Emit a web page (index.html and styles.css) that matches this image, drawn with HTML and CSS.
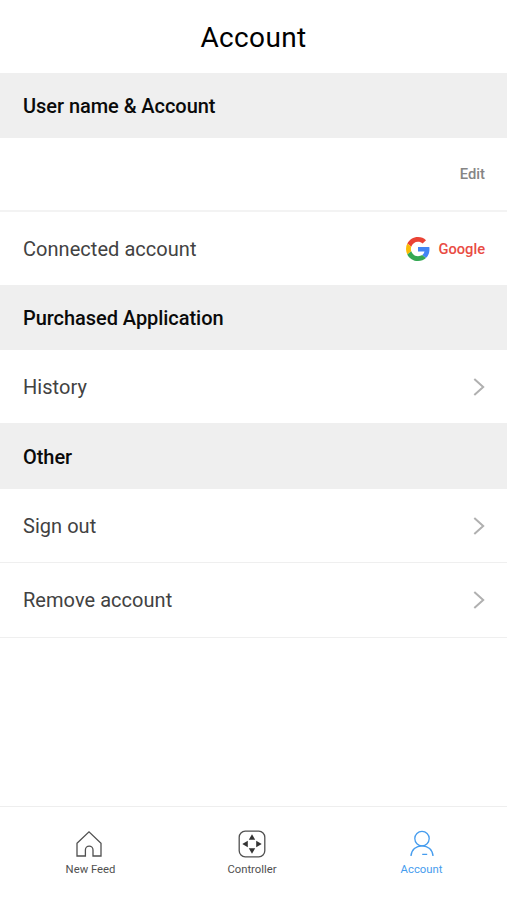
FILE: index.html
```html
<!DOCTYPE html>
<html lang="en">
<head>
  <meta charset="UTF-8" />
  <meta name="viewport" content="width=device-width, initial-scale=1.0" />
  <title>Account</title>
  <link rel="stylesheet" href="styles.css">
</head>
<body>

  <header>
    <h1>Account</h1>
  </header>

  <main>
    <h2>User name &amp; Account</h2>
    <div class="row thick">
      <a class="edit">Edit</a>
    </div>
    <div class="row connected">
      <span class="label">Connected account</span>
      <div class="provider">
        <svg class="google" viewBox="0 0 48 48">
          <path fill="#EA4335" d="M24 9.5c3.54 0 6.71 1.22 9.21 3.6l6.85-6.85C35.9 2.38 30.47 0 24 0 14.62 0 6.51 5.38 2.56 13.22l7.98 6.19C12.43 13.72 17.74 9.5 24 9.5z"/>
          <path fill="#4285F4" d="M46.98 24.55c0-1.57-.15-3.09-.38-4.55H24v9.02h12.94c-.58 2.96-2.26 5.48-4.78 7.18l7.73 6c4.51-4.18 7.09-10.36 7.09-17.65z"/>
          <path fill="#FBBC05" d="M10.53 28.59c-.48-1.45-.76-2.99-.76-4.59s.27-3.14.76-4.59l-7.98-6.19C.92 16.46 0 20.12 0 24c0 3.88.92 7.54 2.56 10.78l7.97-6.19z"/>
          <path fill="#34A853" d="M24 48c6.48 0 11.93-2.13 15.89-5.81l-7.73-6c-2.15 1.45-4.92 2.3-8.16 2.3-6.26 0-11.57-4.22-13.47-9.91l-7.98 6.19C6.51 42.62 14.62 48 24 48z"/>
        </svg>
        <span>Google</span>
      </div>
    </div>

    <h2 class="purchased">Purchased Application</h2>
    <div class="row">
      <span class="label">History</span>
      <svg class="arrow" viewBox="0 0 12 18"><path d="M1.3 1 L10.2 9 L1.3 17"/></svg>
    </div>

    <h2 class="other">Other</h2>
    <div class="row line">
      <span class="label">Sign out</span>
      <svg class="arrow" viewBox="0 0 12 18"><path d="M1.3 1 L10.2 9 L1.3 17"/></svg>
    </div>
    <div class="row line last">
      <span class="label">Remove account</span>
      <svg class="arrow" viewBox="0 0 12 18"><path d="M1.3 1 L10.2 9 L1.3 17"/></svg>
    </div>
  </main>

  <nav>
    <a class="tab feed">
      <svg viewBox="0 0 28 28"><path d="M2 13.2 L14 1.8 L26 13.2 V26 H18 V20 a3.8 3.8 0 0 0 -7.6 0 V26 H2 Z"/></svg>
      <span>New Feed</span>
    </a>
    <a class="tab">
      <svg viewBox="0 0 28 28">
        <rect x="1.2" y="1.2" width="25.6" height="25.6" rx="6"/>
        <path class="fill" d="M14 4.3 L17.2 9.8 H10.8 Z M14 23.7 L17.2 18.2 H10.8 Z M4.3 14 L9.8 10.8 V17.2 Z M23.7 14 L18.2 10.8 V17.2 Z"/>
      </svg>
      <span>Controller</span>
    </a>
    <a class="tab active">
      <svg viewBox="0 0 28 28">
        <circle cx="14" cy="8.6" r="7.2"/>
        <path d="M3 26 C3.4 19.8 8 15.8 14 15.8 S24.6 19.8 25 26 M14.2 24.3 H19.2"/>
      </svg>
      <span>Account</span>
    </a>
  </nav>

</body>
</html>
```
FILE: styles.css
```css
* {
  margin: 0;
  padding: 0;
  box-sizing: border-box;
}

body {
  display: flex;
  flex-direction: column;
  height: 100vh;
  background: #fff;
  color: #424242;
  font-family: Roboto, sans-serif;
  overflow: hidden;
}

header {
  height: 73px;
  padding-top: 2px;
  display: flex;
  align-items: center;
  justify-content: center;
}

h1 {
  font-size: 28px;
  font-weight: 400;
  letter-spacing: 0.35px;
  color: #000;
}

main {
  flex: 1;
}

h2 {
  height: 65px;
  padding: 0 23px;
  line-height: 66px;
  background: #efefef;
  color: #0a0a0a;
  font-size: 20px;
  font-weight: 500;
  letter-spacing: -0.05px;
}

.purchased {
  line-height: 67px;
}

.other {
  height: 66px;
  line-height: 68px;
}

.row {
  display: flex;
  align-items: center;
  justify-content: space-between;
  height: 73px;
  padding: 0 22px 0 23px;
}

.thick {
  height: 74px;
  justify-content: flex-end;
  border-bottom: 2px solid #f3f3f3;
}

.line {
  height: 74px;
  border-bottom: 1px solid #efefef;
}

.last {
  height: 75px;
}

.label {
  font-size: 20px;
  letter-spacing: 0.04px;
}

.edit {
  color: #858585;
  font-size: 14.8px;
  font-weight: 500;
}

.provider {
  display: flex;
  align-items: center;
  gap: 8px;
  color: #e94b43;
  font-size: 14.7px;
  font-weight: 500;
}

.google {
  width: 24px;
  height: 24px;
}

.arrow {
  width: 12px;
  height: 18px;
  fill: none;
  stroke: #b0b0b0;
  stroke-width: 2;
}

/* Bottom tabs */
nav {
  display: grid;
  grid-template-columns: 155px 168px 171px;
  height: 94px;
  border-top: 1px solid #eee;
  padding: 23px 0 0 13px;
}

.tab {
  display: flex;
  flex-direction: column;
  align-items: center;
  gap: 5px;
  color: #505050;
  font-size: 11.3px;
}

.tab svg {
  width: 28px;
  height: 28px;
  fill: none;
  stroke: currentColor;
  stroke-width: 1.3;
}

.feed svg {
  margin-right: 3px;
}

.tab .fill {
  fill: #333;
  stroke: none;
}

.tab.active {
  color: #459cee;
}
```
